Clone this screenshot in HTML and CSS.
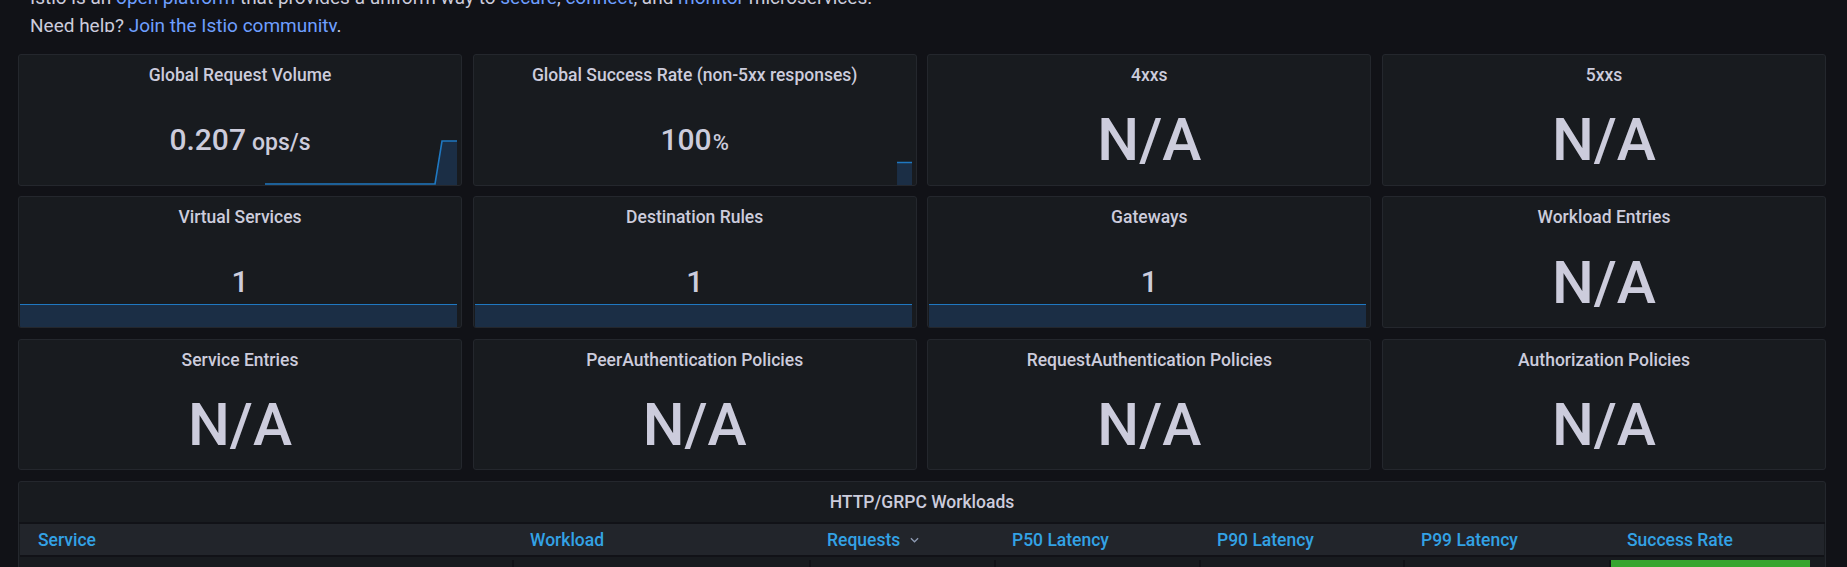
FILE: index.html
```html
<!DOCTYPE html>
<html lang="en">
<head>
<meta charset="utf-8">
<title>Istio Mesh Dashboard</title>
<link rel="stylesheet" href="styles.css">
</head>
<body>
<div class="intro">
  <p class="intro-text">Istio is an <a href="#">open platform</a> that provides a uniform way to <a href="#">secure</a>, <a href="#">connect</a>, and <a href="#">monitor</a> microservices.<br>Need help? <a href="#">Join the Istio community</a>.</p>
</div>

<div class="dashboard">
  <div class="panel">
    <div class="panel-title">Global Request Volume</div>
    <div class="panel-body">
      <svg class="spark" viewBox="0 0 437 45" preserveAspectRatio="none">
        <polygon class="spark-fill" points="415,45 422,1 437,1 437,45"/>
        <polyline class="spark-line" points="245,44 415,44 422,1 437,1"/>
      </svg>
      <div class="value small">0.207<span class="unit">ops/s</span></div>
    </div>
  </div>
  <div class="panel">
    <div class="panel-title">Global Success Rate (non-5xx responses)</div>
    <div class="panel-body">
      <svg class="spark" viewBox="0 0 437 45" preserveAspectRatio="none">
        <rect class="spark-fill" x="422" y="22" width="15" height="23"/>
        <line class="spark-line" x1="422" y1="22.5" x2="437" y2="22.5"/>
      </svg>
      <div class="value small">100<span class="pct">%</span></div>
    </div>
  </div>
  <div class="panel">
    <div class="panel-title">4xxs</div>
    <div class="panel-body"><div class="value">N/A</div></div>
  </div>
  <div class="panel">
    <div class="panel-title">5xxs</div>
    <div class="panel-body"><div class="value">N/A</div></div>
  </div>

  <div class="panel">
    <div class="panel-title">Virtual Services</div>
    <div class="panel-body">
      <div class="flat-spark"></div>
      <div class="value small">1</div>
    </div>
  </div>
  <div class="panel">
    <div class="panel-title">Destination Rules</div>
    <div class="panel-body">
      <div class="flat-spark"></div>
      <div class="value small">1</div>
    </div>
  </div>
  <div class="panel">
    <div class="panel-title">Gateways</div>
    <div class="panel-body">
      <div class="flat-spark"></div>
      <div class="value small">1</div>
    </div>
  </div>
  <div class="panel">
    <div class="panel-title">Workload Entries</div>
    <div class="panel-body"><div class="value">N/A</div></div>
  </div>

  <div class="panel">
    <div class="panel-title">Service Entries</div>
    <div class="panel-body"><div class="value">N/A</div></div>
  </div>
  <div class="panel">
    <div class="panel-title">PeerAuthentication Policies</div>
    <div class="panel-body"><div class="value">N/A</div></div>
  </div>
  <div class="panel">
    <div class="panel-title">RequestAuthentication Policies</div>
    <div class="panel-body"><div class="value">N/A</div></div>
  </div>
  <div class="panel">
    <div class="panel-title">Authorization Policies</div>
    <div class="panel-body"><div class="value">N/A</div></div>
  </div>

  <div class="panel table-panel">
    <div class="panel-title">HTTP/GRPC Workloads</div>
    <div class="table">
      <div class="thead">
        <div class="th">Service</div>
        <div class="th">Workload</div>
        <div class="th">Requests <svg class="chev" viewBox="0 0 10 6"><polyline points="1,1 5,5 9,1"/></svg></div>
        <div class="th">P50 Latency</div>
        <div class="th">P90 Latency</div>
        <div class="th">P99 Latency</div>
        <div class="th">Success Rate</div>
      </div>
      <div class="tbody">
        <div class="td"></div>
        <div class="td"></div>
        <div class="td"></div>
        <div class="td"></div>
        <div class="td"></div>
        <div class="td"></div>
        <div class="td td-green"></div>
      </div>
    </div>
  </div>
</div>
</body>
</html>
```

FILE: styles.css
```css
html, body {
  margin: 0;
  padding: 0;
  background: #111217;
  color: #ccccdc;
  font-family: Roboto, "Liberation Sans", sans-serif;
  overflow: hidden;
}

.intro {
  height: 32px;
  overflow: hidden;
  padding-left: 30px;
}

.intro-text {
  margin: -16.4px 0 0;
  font-size: 19px;
  line-height: 28.5px;
  color: #ccccdc;
}

.intro-text a {
  color: #6e9fff;
  text-decoration: none;
}

.dashboard {
  margin-top: 22px;
  padding: 0 21px 0 18px;
  display: grid;
  grid-template-columns: repeat(4, 1fr);
  grid-auto-rows: 131.67px;
  gap: 10.67px;
}

.panel {
  background: #181b1f;
  border: 1px solid #24272d;
  border-radius: 3px;
  display: flex;
  flex-direction: column;
  overflow: hidden;
  min-width: 0;
}

.panel-title {
  height: 40px;
  line-height: 40px;
  text-align: center;
  font-size: 17.5px;
  font-weight: 500;
  color: #ccccdc;
  white-space: nowrap;
}

.panel-body {
  flex: 1;
  position: relative;
  display: flex;
  align-items: center;
  justify-content: center;
}

.value {
  position: relative;
  font-size: 59px;
  font-weight: 500;
  line-height: 1;
  color: #ccccdc;
  white-space: nowrap;
}

.value.small {
  font-size: 30px;
}

.unit {
  font-size: 23px;
  margin-left: 6px;
}

.pct {
  font-size: 22px;
  margin-left: 1px;
}

.spark {
  position: absolute;
  left: 1px;
  right: 4px;
  bottom: 0;
  width: calc(100% - 5px);
  height: 45px;
}

.spark-fill {
  fill: #1b2e45;
}

.spark-line {
  fill: none;
  stroke: #1f78c1;
  stroke-width: 1.6;
}

.flat-spark {
  position: absolute;
  left: 1px;
  right: 4px;
  bottom: 0;
  height: 22px;
  background: #1b2e45;
  border-top: 1.6px solid #1f78c1;
}

.table-panel {
  grid-column: 1 / -1;
  height: 200px;
}

.table {
  padding: 0 1px;
  border-top: 2px solid #111217;
}

.thead,
.tbody {
  display: grid;
  grid-template-columns: 492px 297px 185px 205px 204px 206px 1fr;
}

.thead {
  height: 31px;
  background: #22252b;
  border-bottom: 2px solid #111217;
}

.th {
  padding-left: 18px;
  line-height: 33px;
  font-size: 17.5px;
  font-weight: 500;
  color: #33a2e5;
  white-space: nowrap;
}

.chev {
  width: 9px;
  height: 6px;
  margin-left: 5px;
  vertical-align: 3px;
}

.chev polyline {
  fill: none;
  stroke: #8e9ab3;
  stroke-width: 1.4;
}

.tbody {
  padding-top: 3px;
  padding-right: 14px;
}

.td {
  height: 30px;
  border-left: 2px solid #111217;
}

.td:first-child {
  border-left: none;
}

.td-green {
  background: #37a52f;
}
```
